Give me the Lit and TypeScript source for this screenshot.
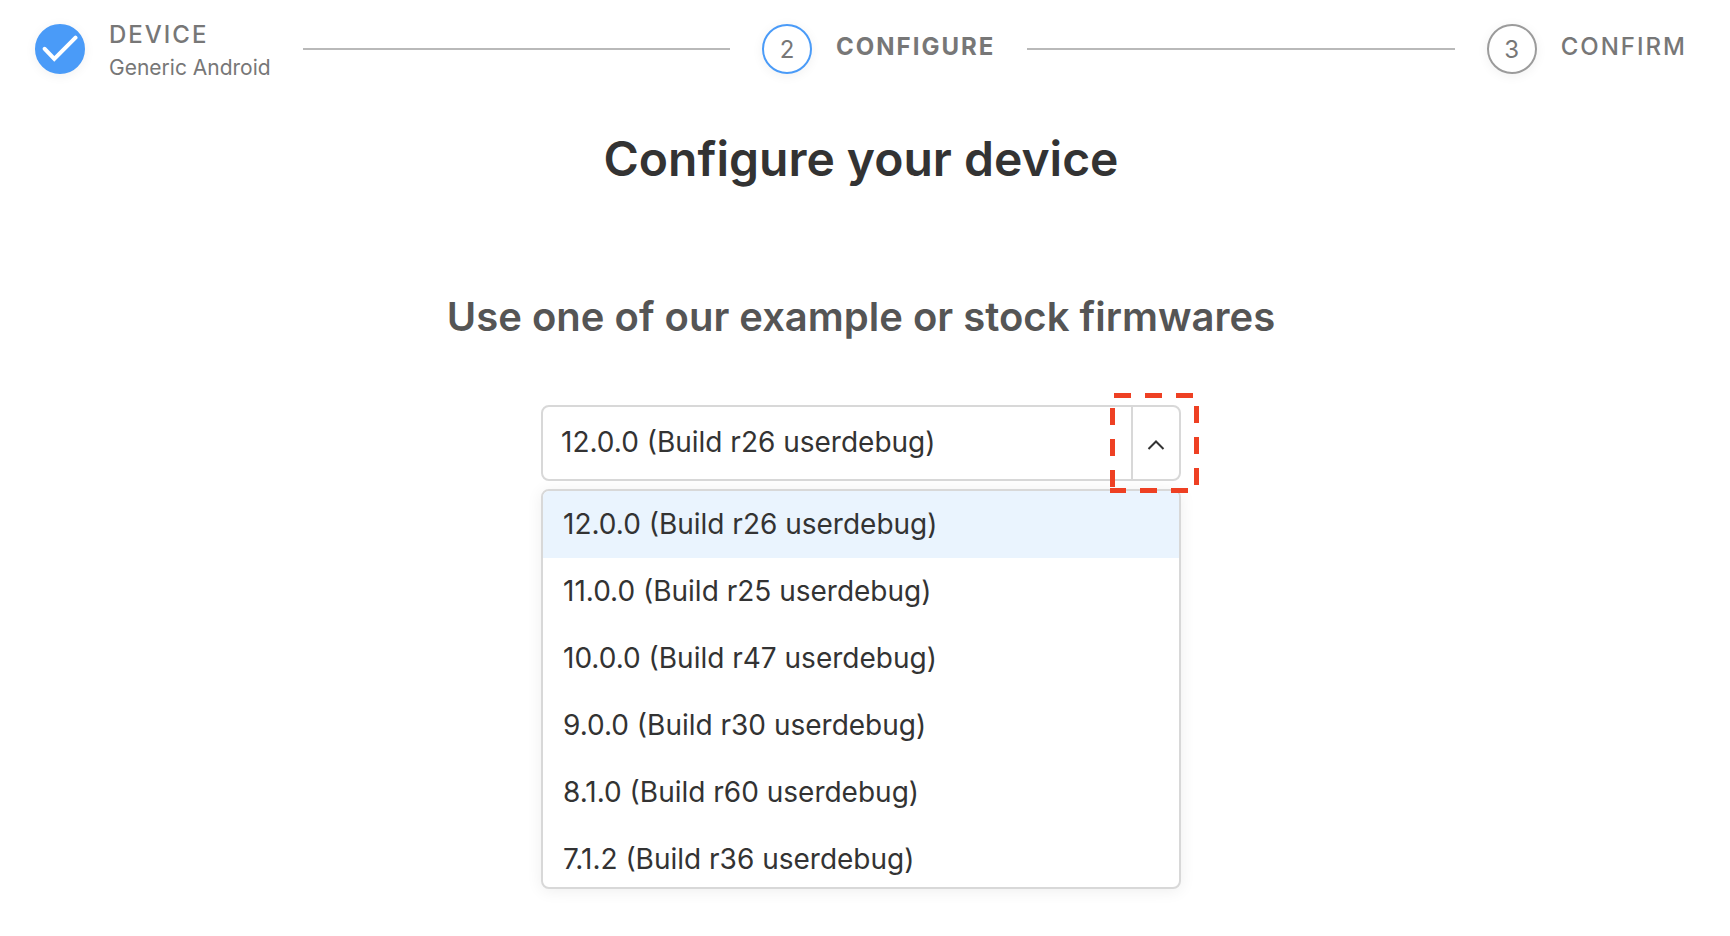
import { LitElement, html, css, svg, nothing } from "lit";
import { customElement, property, state } from "lit/decorators.js";
import { classMap } from "lit/directives/class-map.js";

type StepState = "done" | "current" | "upcoming";

interface Step {
  title: string;
  detail?: string;
  state: StepState;
}

@customElement("step-bar")
class StepBar extends LitElement {
  @property({ attribute: false }) steps: Step[] = [];

  static styles = css`
    :host {
      display: block;
    }
    .steps {
      display: flex;
      align-items: center;
      gap: 32px;
      margin: 0;
      padding: 0;
      list-style: none;
      color: #777;
    }
    .step {
      display: flex;
      align-items: center;
      gap: 24px;
      flex: none;
    }
    .line {
      flex: 1;
      height: 2px;
      background: #b9b9b9;
    }
    .marker {
      box-sizing: border-box;
      display: grid;
      place-items: center;
      width: 50px;
      height: 50px;
      border: 2px solid #9b9b9b;
      border-radius: 50%;
      background: #fff;
      box-shadow: 0 2px 12px rgba(0, 0, 0, 0.06);
      font-size: 24px;
      line-height: 32px;
    }
    .marker.current {
      border-color: #4a9bf8;
    }
    .marker.done {
      border-color: #4a9bf8;
      background: #4a9bf8;
    }
    .number {
      padding-top: 2px;
    }
    .tick {
      width: 36px;
      height: 28px;
    }
    .title {
      padding-bottom: 4px;
      font-size: 24px;
      line-height: 34px;
      font-weight: 500;
      letter-spacing: 2px;
    }
    .title.current {
      font-weight: 700;
    }
    .detail {
      font-size: 21px;
      line-height: 24px;
    }
  `;

  render() {
    return html`<ol class="steps">
      ${this.steps.map(
        (step, i) => html`
          ${i > 0 ? html`<li class="line" role="presentation"></li>` : nothing}
          <li class="step" aria-current=${step.state === "current" ? "step" : nothing}>
            <div class="marker ${step.state}">
              ${step.state === "done"
                ? html`<svg class="tick" viewBox="0 0 36 28" fill="none" aria-hidden="true">
                    <path d="M2.7 13.8 L12.3 23.8 L33.5 2.7" stroke="#fff" stroke-width="4" stroke-linecap="round" />
                  </svg>`
                : html`<span class="number">${i + 1}</span>`}
            </div>
            <div>
              <div class="title ${step.state}">${step.title}</div>
              ${step.detail ? html`<div class="detail">${step.detail}</div>` : nothing}
            </div>
          </li>
        `
      )}
    </ol>`;
  }
}

@customElement("firmware-picker")
class FirmwarePicker extends LitElement {
  @property({ attribute: false }) options: string[] = [];
  @state() private selected = 0;
  @state() private open = true;

  static styles = css`
    :host {
      display: block;
      position: relative;
      color: #333;
      font-size: 28px;
    }
    .field {
      box-sizing: border-box;
      display: flex;
      height: 76px;
      border: 2px solid #d8d8d8;
      border-radius: 8px;
      background: #fff;
    }
    .value {
      flex: 1;
      min-width: 0;
      margin: 0;
      padding: 0 18px 2px;
      border: 0;
      outline: 0;
      background: none;
      color: inherit;
      font: inherit;
    }
    .toggle {
      display: grid;
      place-items: center;
      width: 48px;
      box-sizing: border-box;
      margin: 0;
      padding: 4px 0 0;
      border: 0;
      border-left: 2px solid #d8d8d8;
      background: none;
      color: #333;
      cursor: pointer;
    }
    .chevron {
      width: 18px;
      height: 12px;
    }
    .chevron.closed {
      transform: rotate(180deg);
    }
    .callout {
      position: absolute;
      top: -12px;
      right: -18px;
      z-index: 2;
      width: 89px;
      height: 100px;
      pointer-events: none;
    }
    .list {
      position: absolute;
      top: 84px;
      left: 0;
      right: 0;
      box-sizing: border-box;
      max-height: 400px;
      margin: 0;
      padding: 0;
      overflow: hidden;
      border: 2px solid #d8d8d8;
      border-radius: 8px;
      background: #fff;
      box-shadow: 0 2px 16px rgba(0, 0, 0, 0.07);
      list-style: none;
    }
    .option {
      padding: 0 20px;
      line-height: 67px;
      cursor: pointer;
    }
    .option.selected {
      background: #eaf4fe;
    }
  `;

  private choose(index: number) {
    this.selected = index;
    this.open = false;
  }

  render() {
    return html`
      <div class="field">
        <input
          class="value"
          type="text"
          role="combobox"
          aria-label="Firmware"
          aria-controls="firmwares"
          aria-expanded=${this.open ? "true" : "false"}
          readonly
          .value=${this.options[this.selected] ?? ""}
        />
        <button class="toggle" type="button" aria-label="Toggle firmware list" @click=${() => (this.open = !this.open)}>
          <svg class=${classMap({ chevron: true, closed: !this.open })} viewBox="0 0 18 12" fill="none" aria-hidden="true">
            <path d="M1.5 10 L9 2.5 L16.5 10" stroke="currentColor" stroke-width="2" />
          </svg>
        </button>
      </div>
      ${this.open
        ? html`<ul class="list" id="firmwares" role="listbox" aria-label="Firmwares">
            ${this.options.map(
              (option, i) => html`<li
                class=${classMap({ option: true, selected: i === this.selected })}
                role="option"
                aria-selected=${i === this.selected ? "true" : "false"}
                @click=${() => this.choose(i)}
              >${option}</li>`
            )}
          </ul>`
        : nothing}
      <svg class="callout" viewBox="0 0 89 100" fill="none" stroke="#ee4023" stroke-width="5" aria-hidden="true">
        ${[
          "M4 2.5 H83",
          "M86.5 13 V92",
          "M78 97.5 H0",
          "M2.5 15 V94",
        ].map((d) => svg`<path d=${d} stroke-dasharray="17 14" />`)}
      </svg>
    `;
  }
}

@customElement("app-root")
class AppRoot extends LitElement {
  private steps: Step[] = [
    { title: "DEVICE", detail: "Generic Android", state: "done" },
    { title: "CONFIGURE", state: "current" },
    { title: "CONFIRM", state: "upcoming" },
  ];

  private firmwares = [
    "12.0.0 (Build r26 userdebug)",
    "11.0.0 (Build r25 userdebug)",
    "10.0.0 (Build r47 userdebug)",
    "9.0.0 (Build r30 userdebug)",
    "8.1.0 (Build r60 userdebug)",
    "7.1.2 (Build r36 userdebug)",
  ];

  static styles = css`
    :host {
      display: block;
      box-sizing: border-box;
      min-height: 100vh;
      padding: 18px 43px 40px 35px;
      background: #fff;
      font-family: Inter, "Liberation Sans", sans-serif;
    }
    .heading {
      margin: 51px 0 0;
      color: #333;
      font-size: 48px;
      line-height: 56px;
      font-weight: 600;
      text-align: center;
    }
    .subheading {
      margin: 106px 0 0;
      color: #555;
      font-size: 40px;
      line-height: 48px;
      font-weight: 600;
      text-align: center;
    }
    .picker {
      max-width: 640px;
      margin: 64px auto 0;
    }
  `;

  render() {
    return html`
      <step-bar .steps=${this.steps}></step-bar>
      <main>
        <h1 class="heading">Configure your device</h1>
        <h2 class="subheading">Use one of our example or stock firmwares</h2>
        <firmware-picker class="picker" .options=${this.firmwares}></firmware-picker>
      </main>
    `;
  }
}
